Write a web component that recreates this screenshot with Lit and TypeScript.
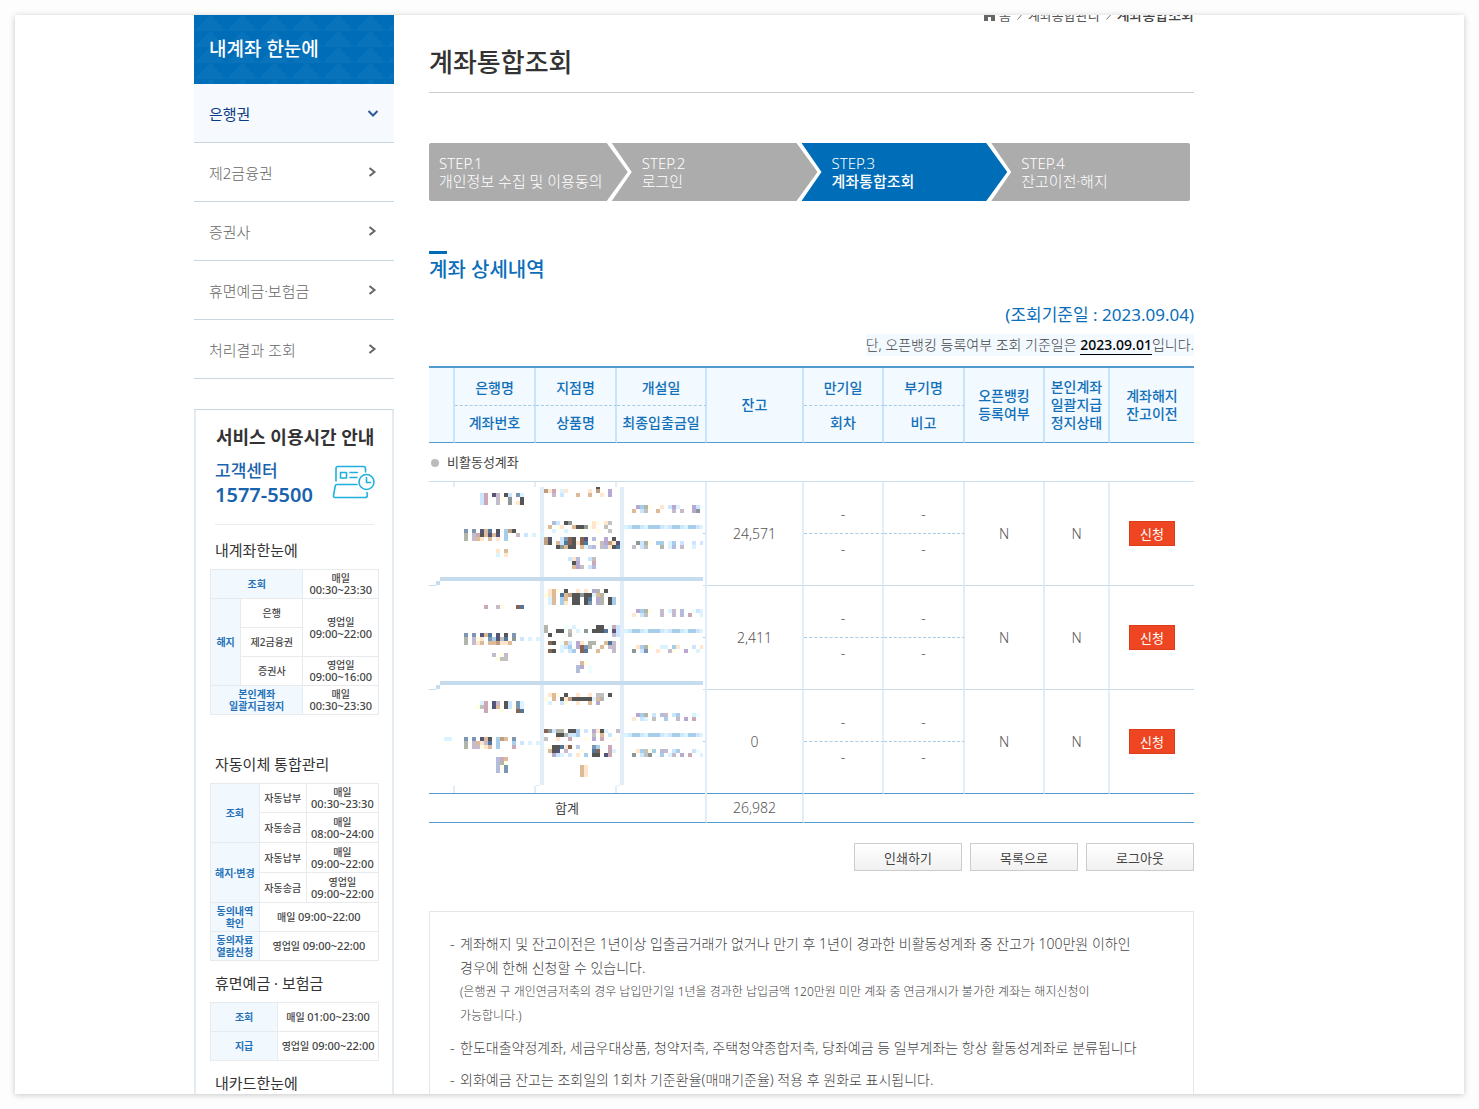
import { LitElement, html, svg, css, nothing } from "lit";
import { customElement } from "lit/decorators.js";

type Run = [number, number, string];

const PALETTE: Record<string, string> = {
  k: "#555555", n: "#555577", b: "#7c95b2", d: "#50789c", l: "#cce6ff", c: "#dbf3ff",
  y: "#fffee2", o: "#ffe6cc", t: "#ddbb99", r: "#bd9e80", w: "#866452", p: "#cba8b5",
  m: "#c6bbcc", v: "#b6a8d0", u: "#bfcbe8", e: "#b3bddb", g: "#c1c1be", h: "#b2b5aa",
  q: "#8c9696", x: "#a8cdea", a: "#f0fdff",
};

const BLUE_RUN: Run = [10, 47, "clxxlcxxxlclxxlcxxlc"];

// Each run is [row, first column, colour keys]; a dot leaves the cell empty.
const MASKED: Run[][] = [
  [
    [0, 40, "k"],
    [1, 27, "rop.co.....o.r..v"],
    [2, 29, "m.l...t..t..o.v"], [2, 11, "lp.nm.kl.bc"],
    [3, 11, "lp..my.q..k"], [4, 11, "lp..m..q.ok"],
    [5, 50, "vxhy..o.lvc...vla"], [6, 49, "t.lg..t...m.m..vq"],
    [9, 29, "el.kq.....oy.og"],
    [10, 28, "t.yo..tkkqyo..g"], [11, 29, "c..c...y...y..g"],
    [11, 7, "b.b.ntd.k.xrk"], [12, 7, "h.mpktntn.x..m.l.c.c"], [13, 7, "h.mto.t.o.x"],
    [13, 27, "rn..lbwk.wn.e..v.k"], [14, 27, "rk.tldwkowd..ymvron"], [15, 30, "kqtkk.tcue.meokd"],
    [16, 15, "o.t"], [17, 15, "c.o"],
    [18, 33, "loe..lg"], [19, 34, "kv...p"], [20, 34, "tvg.le"],
    [14, 50, "qlhy.xx.cx.l..l.l"], [15, 49, "m.lg...h.ce.m..c"],
    BLUE_RUN,
  ],
  [
    [0, 28, "oty.k..o.o.vh.k"],
    [1, 27, "yot.dtrkkqkkcth"], [2, 28, "ct.xt.kk.kd.vh.kx"], [3, 28, "ct.xo.kk.kb.vh.kx"],
    [4, 12, "p..my...wd"],
    [5, 50, "vxhy..m.cm.e..alc"], [6, 49, "o.lg...m..m.e.p..c"],
    [9, 27, "h....a.c.....kk.apl"], [10, 27, "h..kk.g.c.q.kkkd.nl"], [11, 28, "k....h..........ml"],
    [11, 7, "b.b.ntd.n.k.b"], [12, 7, "h.myo.bxngd.q.l.c.c"], [13, 7, "h.mot.ttroot"],
    [13, 28, "wk.atl.vo.hh..tdm"], [14, 31, "clx.vwbh..t.mm"], [15, 28, "wk.c.lx.wd..t...m"],
    [16, 14, "m.ym"], [17, 15, "ygg"], [18, 36, "ty"], [19, 35, "ev.a"], [20, 35, "e..a"],
    [14, 50, "oxhy..cc.xo...l.o"], [15, 49, "q.lb..o..my..v..c"],
    BLUE_RUN,
  ],
  [
    [0, 28, "oty.k..o..o.mg.k"],
    [1, 27, "y.t.korkkkkkcth"], [2, 28, "c..ly..o..t.v"],
    [2, 11, "cp.nm.kl.bc"], [3, 10, "ygp.nt.klybc"], [4, 12, "p...y...wd"],
    [5, 50, "vxh.l.em.lx...ca"], [6, 49, "o.lc.g..x..m.v.p..l"],
    [9, 27, "wqlhh.kkx.l.vokc..m"], [10, 30, "kkhllx...g.t.l"], [11, 27, "g..o..p...y.v.p..y"],
    [11, 2, "cc...b.b.ntk.xrt.b"], [12, 7, "h.mtomd.x...x.l.c.c"], [13, 7, "h.mmyot.x...p"],
    [13, 28, "ykkdow.u...bx..p"], [14, 28, "tkn.m...y..dw..pc"], [15, 29, "vlc.l.o.x.kk.np"],
    [16, 15, "ept"], [17, 15, "ehy"], [18, 15, "eyb"], [19, 15, "e.b"],
    [18, 36, "to"], [19, 36, "to"], [20, 36, "to"],
    [14, 50, "oxgyx.em.lx...la"], [15, 49, "q.lgq..x.cm.v.p..c"],
    BLUE_RUN,
  ],
];

@customElement("masked-cells")
export class MaskedCells extends LitElement {
  static properties = {
    row: { type: Number },
  };
  declare row: number;

  static styles = css`
    :host { display: block; }
    svg { display: block; width: 100%; height: 104px; }
  `;

  private block([j, i, keys]: Run) {
    return [...keys].map((key, n) => {
      if (key === ".") return nothing;
      const x = 7 + 4 * (i + n);
      const top = 3 + 4 * j;
      const y = this.row === 0 ? Math.max(top, 5) : top;
      return svg`<rect x=${x} y=${y} width=${Math.min(4, 274 - x)} height=${top + 4 - y} fill=${PALETTE[key]} />`;
    });
  }

  render() {
    const first = this.row === 0;
    const last = this.row === 2;
    const ticks = [24, 105, 186];
    return html`
      <svg viewBox="0 0 276 104" preserveAspectRatio="none" shape-rendering="crispEdges" aria-hidden="true">
        ${[111, 191].map((x) => svg`<rect x=${x} y=${first ? 5 : 0} width="4" height=${last ? 95 : first ? 99 : 104} fill="#e1eef7" />`)}
        ${first ? ticks.map((x) => svg`<rect x=${x} y="0" width="2" height="5" fill="#e1eef7" />`) : nothing}
        ${last
          ? svg`${ticks.map((x) => svg`<rect x=${x} y="96" width="2" height="7" fill="#e1eef7" />`)}
              <rect x="107" y="95" width="4" height="1" fill="#e1eef7" />
              <rect x="188" y="95" width="3" height="1" fill="#e1eef7" />
              <rect x="0" y="103" width="276" height="1" fill="#519bcf" />`
          : svg`<rect x="11" y="95" width="263" height="4" fill="#c5dcef" />
              <rect x="7" y="99" width="4" height="4" fill="#c5dcef" />
              <rect x="0" y="103" width="7" height="1" fill="#c5dcef" />
              <rect x="274" y="103" width="2" height="1" fill="#c5dcef" />`}
        <rect x="274" y="51" width="2" height="1" fill="#a8cbe6" />
        ${MASKED[this.row].map((run) => this.block(run))}
      </svg>
    `;
  }
}

@customElement("side-menu")
export class SideMenu extends LitElement {
  static styles = css`
    :host { display: block; }
    .title {
      box-sizing: border-box;
      height: 69px;
      margin: 0;
      padding: 0 15px;
      font-size: 19px;
      font-weight: 500;
      line-height: 69px;
      color: #fff;
      background-color: #006db9;
      background-image: conic-gradient(from 135deg at 50% 0, rgba(255, 255, 255, 0.03) 90deg, transparent 0);
      background-size: 32px 16px;
    }
    .list { margin: 0; padding: 0; list-style: none; }
    .link {
      display: flex;
      align-items: center;
      justify-content: space-between;
      height: 58px;
      padding: 0 15px;
      border-bottom: 1px solid #c8d6df;
      font-size: 15px;
      font-weight: 300;
      color: #666;
      text-decoration: none;
    }
    .link.on { background: #f6fafe; color: #0b3a86; font-weight: 400; }
    .arrow { width: 12px; height: 12px; fill: none; stroke: #666; stroke-width: 2; }
    .on .arrow { stroke: #2c58a0; }
  `;

  render() {
    const items = ["은행권", "제2금융권", "증권사", "휴면예금·보험금", "처리결과 조회"];
    return html`
      <h2 class="title">내계좌 한눈에</h2>
      <ul class="list">
        ${items.map((name, i) => html`
          <li>
            <a class="link ${i === 0 ? "on" : ""}" href="#">
              ${name}
              <svg class="arrow" viewBox="0 0 12 12" aria-hidden="true">
                <path d=${i === 0 ? "M1.500 4l4.500 4.500 4.500-4.500" : "M2.500 2l5 4-5 4"} />
              </svg>
            </a>
          </li>
        `)}
      </ul>
    `;
  }
}

@customElement("service-hours")
export class ServiceHours extends LitElement {
  static styles = css`
    :host { display: block; }
    .card {
      padding: 13px 13px 30px 14px;
      border: 2px solid #e3ebf1;
      border-top: 1px solid #c6d5de;
      color: #444;
    }
    .title { margin: 0 0 8px; padding-left: 6px; font-size: 18px; font-weight: 700; line-height: 28px; color: #333; white-space: nowrap; }
    .center { display: flex; justify-content: space-between; margin: 0 3px 0 5px; }
    .contact { margin: 0; color: #1a63ae; line-height: 24px; }
    .name { display: block; font-size: 17px; font-weight: 500; }
    .phone { display: block; font-size: 20px; font-weight: 600; }
    .icon { width: 44px; height: 34px; margin-top: 6px; fill: none; stroke: #1fb0de; stroke-width: 1.6; stroke-linecap: round; stroke-linejoin: round; }
    .rule { height: 1px; margin: 17px 5px 13px; border: 0; background: #e9ebed; }
    .sub { margin: 10px 0 7px 5px; font-size: 15px; font-weight: 400; line-height: 24px; color: #333; }
    .sub.far { margin-top: 37px; }
    .hours { width: 100%; table-layout: fixed; border-collapse: collapse; font-size: 10px; font-weight: 500; line-height: 12px; text-align: center; white-space: nowrap; }
    .hours th, .hours td { height: 28px; padding: 0; border: 1px solid #e8ebee; }
    .hours .tall td { height: 29px; }
    .hours th { background: #f1f8fe; color: #2471b8; font-weight: 700; }
    .time { font-size: 11px; }
  `;

  render() {
    const t = (v: string) => html`<span class="time">${v}</span>`;
    return html`
      <section class="card">
        <h3 class="title">서비스 이용시간 안내</h3>
        <div class="center">
          <p class="contact"><span class="name">고객센터</span><span class="phone">1577-5500</span></p>
          <svg class="icon" viewBox="0 0 44 34" aria-hidden="true">
            <path d="M4 16V3.500Q4 1.500 6 1.500H31.500Q33.500 1.500 33.500 3.500V7" />
            <path d="M8.500 7.500h6v5.500h-6zM18 7.500h7.500M18 12.500h7" />
            <path d="M25 19.500H5Q3.500 19.500 3.200 21L1.500 30.500Q1.300 32.500 3 32.500H33Q35.500 32.500 35.300 30L35 27.500" />
            <circle cx="34.500" cy="17" r="7.500" />
            <path d="M34.500 12.500V17.500H38.500" />
          </svg>
        </div>
        <hr class="rule" />
        <h4 class="sub">내계좌한눈에</h4>
        <table class="hours">
          <colgroup><col style="width:18%" /><col style="width:37%" /><col /></colgroup>
          <tr><th colspan="2">조회</th><td>매일<br />${t("00:30~23:30")}</td></tr>
          <tr><th rowspan="3">해지</th><td>은행</td><td rowspan="2">영업일<br />${t("09:00~22:00")}</td></tr>
          <tr><td>제2금융권</td></tr>
          <tr><td>증권사</td><td>영업일<br />${t("09:00~16:00")}</td></tr>
          <tr><th colspan="2">본인계좌<br />일괄지급정지</th><td>매일<br />${t("00:30~23:30")}</td></tr>
        </table>
        <h4 class="sub far">자동이체 통합관리</h4>
        <table class="hours">
          <colgroup><col style="width:29%" /><col style="width:28%" /><col /></colgroup>
          <tr><th rowspan="2">조회</th><td>자동납부</td><td>매일<br />${t("00:30~23:30")}</td></tr>
          <tr class="tall"><td>자동송금</td><td>매일<br />${t("08:00~24:00")}</td></tr>
          <tr class="tall"><th rowspan="2">해지·변경</th><td>자동납부</td><td>매일<br />${t("09:00~22:00")}</td></tr>
          <tr class="tall"><td>자동송금</td><td>영업일<br />${t("09:00~22:00")}</td></tr>
          <tr><th>동의내역<br />확인</th><td colspan="2">매일 ${t("09:00~22:00")}</td></tr>
          <tr><th>동의자료<br />열람신청</th><td colspan="2">영업일 ${t("09:00~22:00")}</td></tr>
        </table>
        <h4 class="sub">휴면예금 · 보험금</h4>
        <table class="hours">
          <colgroup><col style="width:40%" /><col /></colgroup>
          <tr><th>조회</th><td>매일 ${t("01:00~23:00")}</td></tr>
          <tr><th>지급</th><td>영업일 ${t("09:00~22:00")}</td></tr>
        </table>
        <h4 class="sub">내카드한눈에</h4>
      </section>
    `;
  }
}

@customElement("step-bar")
export class StepBar extends LitElement {
  static styles = css`
    :host { display: block; }
    .steps { display: flex; margin: 0 4px 0 0; padding: 0; list-style: none; }
    .step {
      flex: 206 1 0;
      min-width: 0;
      height: 58px;
      margin-left: -16px;
      background: #acacac;
      color: #fff;
      font-size: 15px;
      font-weight: 300;
      line-height: 18px;
      white-space: nowrap;
      clip-path: polygon(0 0, calc(100% - 21px) 0, 100% 50%, calc(100% - 21px) 100%, 0 100%, 20px 50%);
    }
    .step:first-child {
      flex-grow: 199;
      margin-left: 0;
      border-radius: 2px 0 0 2px;
      clip-path: polygon(0 0, calc(100% - 21px) 0, 100% 50%, calc(100% - 21px) 100%, 0 100%);
    }
    .step:last-child {
      flex-grow: 199;
      border-radius: 0 2px 2px 0;
      clip-path: polygon(0 0, 100% 0, 100% 100%, 0 100%, 20px 50%);
    }
    .step.on { background: #006db9; }
    .text { padding: 11px 0 0 30px; }
    .step:first-child .text { padding-left: 10px; }
    .no, .label { display: block; }
    .on .label { font-weight: 500; }
  `;

  render() {
    const labels = ["개인정보 수집 및 이용동의", "로그인", "계좌통합조회", "잔고이전·해지"];
    return html`
      <ol class="steps">
        ${labels.map((label, i) => html`
          <li class="step ${i === 2 ? "on" : ""}">
            <div class="text"><span class="no">STEP.${i + 1}</span><span class="label">${label}</span></div>
          </li>
        `)}
      </ol>
    `;
  }
}

@customElement("account-table")
export class AccountTable extends LitElement {
  static styles = css`
    :host { display: block; }
    .accounts {
      width: 100%;
      table-layout: fixed;
      border-collapse: separate;
      border-spacing: 0;
      border-top: 2px solid #519bcf;
      font-size: 14px;
      line-height: 18px;
      text-align: center;
      color: #555;
    }
    th, td { box-sizing: border-box; padding: 0; }
    thead th {
      background: #f2f9ff;
      color: #1170b9;
      font-weight: 500;
      border-right: 2px solid #c8e3fc;
      border-bottom: 1px solid #519bcf;
      white-space: nowrap;
    }
    thead .upper { height: 38px; padding-top: 2px; border-bottom: 1px dashed #a8cbe3; }
    thead .lower { height: 37px; padding-bottom: 2px; }
    thead .end, tbody .end, tfoot .end { border-right: 0; }
    .group { height: 39px; border-bottom: 1px solid #c8deee; text-align: left; font-size: 13px; font-weight: 400; color: #444; }
    .dot { display: inline-block; width: 8px; height: 8px; margin: 0 8px 0 2px; border-radius: 50%; background: #bbb; }
    .cell { border-right: 2px solid #e1eef7; border-bottom: 1px solid #c8dbe6; font-weight: 300; }
    .mask { border-bottom: 0; }
    .top { height: 52px; padding-bottom: 10px; border-bottom: 1px dashed #a8cbe3; vertical-align: bottom; }
    .bottom { height: 52px; padding-top: 6px; vertical-align: top; }
    .last .cell:not(.top):not(.mask) { border-bottom-color: #519bcf; }
    .apply {
      width: 46px;
      height: 25px;
      padding: 0;
      border: 1px solid #dd3a17;
      background: #ee4622;
      color: #fff;
      font-family: inherit;
      font-size: 13px;
      line-height: 18px;
    }
    .sum { height: 29px; border-right: 2px solid #e1eef7; border-bottom: 1px solid #519bcf; font-weight: 300; }
    .sum.name { font-size: 13px; font-weight: 400; color: #444; }
  `;

  render() {
    const balances = ["24,571", "2,411", "0"];
    return html`
      <table class="accounts">
        <colgroup>
          ${[26, 81, 81, 90, 97, 80, 81, 80, 65].map((w) => html`<col style="width:${w}px" />`)}
          <col />
        </colgroup>
        <thead>
          <tr>
            <th rowspan="2"></th>
            <th class="upper">은행명</th>
            <th class="upper">지점명</th>
            <th class="upper">개설일</th>
            <th rowspan="2">잔고</th>
            <th class="upper">만기일</th>
            <th class="upper">부기명</th>
            <th rowspan="2">오픈뱅킹<br />등록여부</th>
            <th rowspan="2">본인계좌<br />일괄지급<br />정지상태</th>
            <th rowspan="2" class="end">계좌해지<br />잔고이전</th>
          </tr>
          <tr>
            <th class="lower">계좌번호</th>
            <th class="lower">상품명</th>
            <th class="lower">최종입출금일</th>
            <th class="lower">회차</th>
            <th class="lower">비고</th>
          </tr>
        </thead>
        <tbody>
          <tr><th class="group" colspan="10"><span class="dot"></span>비활동성계좌</th></tr>
          ${balances.map((amount, i) => html`
            <tr class=${i === 2 ? "last" : ""}>
              <td class="cell mask" colspan="4" rowspan="2"><masked-cells .row=${i}></masked-cells></td>
              <td class="cell" rowspan="2">${amount}</td>
              <td class="cell top">-</td>
              <td class="cell top">-</td>
              <td class="cell" rowspan="2">N</td>
              <td class="cell" rowspan="2">N</td>
              <td class="cell end" rowspan="2"><button class="apply" type="button">신청</button></td>
            </tr>
            <tr class=${i === 2 ? "last" : ""}>
              <td class="cell bottom">-</td>
              <td class="cell bottom">-</td>
            </tr>
          `)}
        </tbody>
        <tfoot>
          <tr>
            <th class="sum name" colspan="4">합계</th>
            <td class="sum">26,982</td>
            <td class="sum end" colspan="5"></td>
          </tr>
        </tfoot>
      </table>
    `;
  }
}

@customElement("app-root")
export class AppRoot extends LitElement {
  static styles = css`
    :host {
      display: block;
      box-sizing: border-box;
      height: 100vh;
      padding: 15px;
      background: #fdfdfd;
      font-family: "Noto Sans", "Noto Sans CJK KR", sans-serif;
      color: #444;
    }
    .frame {
      box-sizing: border-box;
      height: 100%;
      overflow: hidden;
      padding: 0 270px 0 179px;
      background: #fff;
      box-shadow: 0 1px 6px rgba(0, 0, 0, 0.22);
    }
    .layout { display: grid; grid-template-columns: 200px minmax(0, 1fr); column-gap: 35px; }
    .banner { margin-top: 30px; }
    .crumbs {
      display: flex;
      align-items: center;
      justify-content: flex-end;
      gap: 4px;
      height: 20px;
      margin-top: -10px;
      font-size: 13px;
      line-height: 20px;
      color: #555;
    }
    .crumbs a { color: inherit; text-decoration: none; }
    .crumbs strong { font-size: 14px; font-weight: 500; color: #444; }
    .home { width: 11px; height: 11px; fill: #666; }
    .sep { width: 9px; height: 12px; fill: none; stroke: #777; stroke-width: 1; }
    .title { margin: 0 0 50px; padding: 17px 0 10px; border-bottom: 1px solid #ccc; font-size: 26px; font-weight: 500; line-height: 40px; color: #333; }
    .heading { margin: 50px 0 17px; font-size: 20px; font-weight: 500; line-height: 32px; color: #0a6ebb; }
    .heading::before { content: ""; display: block; width: 18px; height: 3px; background: #006db9; }
    .asof { margin: 0 0 7px; font-size: 17px; font-weight: 400; line-height: 24px; text-align: right; color: #0a6ebb; }
    .note { width: fit-content; margin: 0 0 10px auto; background: #f2f9ff; font-size: 14px; font-weight: 300; line-height: 22px; white-space: nowrap; }
    .note b { font-weight: 500; color: #000; border-bottom: 1px solid #000; }
    .actions { display: flex; justify-content: flex-end; gap: 8px; margin: 20px 0 40px; }
    .action {
      width: 108px;
      height: 28px;
      padding: 0;
      border: 1px solid #ccc;
      background: linear-gradient(#fff, #f1f1f1);
      font-family: inherit;
      font-size: 13px;
      color: #444;
    }
    .guide { margin: 0; padding: 20px 10px 30px 20px; border: 1px solid #e6e6e6; list-style: none; font-size: 14px; font-weight: 300; line-height: 24px; }
    .guide li { display: grid; grid-template-columns: 10px minmax(0, 1fr); margin-bottom: 8px; }
    .small { display: block; font-size: 12px; }
  `;

  render() {
    const sep = html`<svg class="sep" viewBox="0 0 9 12" aria-hidden="true"><path d="M2.500 1.500l4 4.500-4 4.500" /></svg>`;
    return html`
      <div class="frame">
        <div class="layout">
          <aside>
            <side-menu></side-menu>
            <service-hours class="banner"></service-hours>
          </aside>
          <main>
            <nav class="crumbs">
              <svg class="home" viewBox="0 0 11 11" aria-hidden="true"><path d="M5.500 0L11 5V11H7V7H4V11H0V5Z" /></svg>
              <a href="#">홈</a>${sep}<a href="#">계좌통합관리</a>${sep}<strong>계좌통합조회</strong>
            </nav>
            <h1 class="title">계좌통합조회</h1>
            <step-bar></step-bar>
            <h2 class="heading">계좌 상세내역</h2>
            <p class="asof">(조회기준일 : 2023.09.04)</p>
            <p class="note">단, 오픈뱅킹 등록여부 조회 기준일은 <b>2023.09.01</b>입니다.</p>
            <account-table></account-table>
            <div class="actions">
              <button class="action" type="button">인쇄하기</button>
              <button class="action" type="button">목록으로</button>
              <button class="action" type="button">로그아웃</button>
            </div>
            <ul class="guide">
              <li>
                <span>-</span>
                <div>
                  계좌해지 및 잔고이전은 1년이상 입출금거래가 없거나 만기 후 1년이 경과한 비활동성계좌 중 잔고가 100만원 이하인<br />경우에 한해 신청할 수 있습니다.
                  <span class="small">(은행권 구 개인연금저축의 경우 납입만기일 1년을 경과한 납입금액 120만원 미만 계좌 중 연금개시가 불가한 계좌는 해지신청이<br />가능합니다.)</span>
                </div>
              </li>
              <li><span>-</span><span>한도대출약정계좌, 세금우대상품, 청약저축, 주택청약종합저축, 당좌예금 등 일부계좌는 항상 활동성계좌로 분류됩니다</span></li>
              <li><span>-</span><span>외화예금 잔고는 조회일의 1회차 기준환율(매매기준율) 적용 후 원화로 표시됩니다.</span></li>
            </ul>
          </main>
        </div>
      </div>
    `;
  }
}
